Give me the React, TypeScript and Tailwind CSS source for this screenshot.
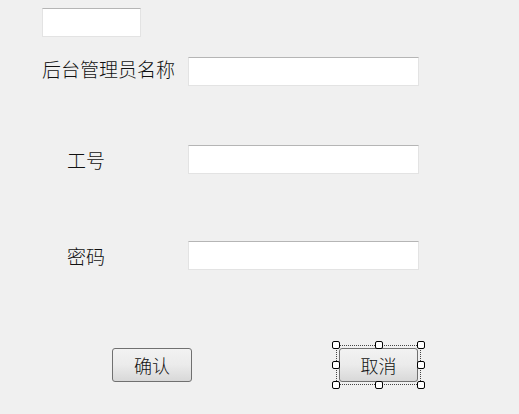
const font = { fontFamily: '"Noto Sans CJK SC", "Noto Sans", sans-serif' };

const Field = ({ className = "" }: { className?: string }) => (
  <div
    className={`h-[29px] bg-white border border-[#e3e3e3] border-t-[#b5b5b5] ${className}`}
  />
);

const Handle = ({ className }: { className: string }) => (
  <span
    className={`absolute w-[8px] h-[8px] bg-white border border-black rounded-[2px] ${className}`}
  />
);

const btn =
  "h-[34px] rounded-[3px] border border-[#707070] bg-gradient-to-b from-[#f2f2f2] via-[#ebebeb] to-[#d8d8d8] text-[18px] leading-none font-light";

const App = () => {
  return (
    <div
      className="w-[519px] h-[414px] bg-[#f0f0f0] pt-[8px] text-[#111] overflow-hidden font-light"
      style={font}
    >
      <Field className="ml-[42px] w-[99px]" />

      <div className="mt-[20px] flex items-center">
        <div className="w-[188px] pl-[42px] text-[19px] leading-none -mt-[6px]">后台管理员名称</div>
        <Field className="w-[231px]" />
      </div>

      <div className="mt-[59px] flex items-center">
        <div className="w-[188px] pl-[67px] text-[19px] leading-none">工号</div>
        <Field className="w-[231px]" />
      </div>

      <div className="mt-[67px] flex items-center">
        <div className="w-[188px] pl-[67px] text-[19px] leading-none">密码</div>
        <Field className="w-[231px]" />
      </div>

      <div className="mt-[78px] flex">
        <button className={`ml-[112px] w-[80px] ${btn}`}>确认</button>
        <div className="relative ml-[147px]">
          <button className={`w-[79px] ${btn}`}>取消</button>
          <div className="absolute -left-[3px] -top-[3px] -right-[3px] -bottom-[3px] border border-dotted border-[#444]" />
          <Handle className="-left-[7px] -top-[7px]" />
          <Handle className="left-[36px] -top-[7px]" />
          <Handle className="-right-[7px] -top-[7px]" />
          <Handle className="-left-[7px] top-[13px]" />
          <Handle className="-right-[7px] top-[13px]" />
          <Handle className="-left-[7px] -bottom-[7px]" />
          <Handle className="left-[36px] -bottom-[7px]" />
          <Handle className="-right-[7px] -bottom-[7px]" />
        </div>
      </div>
    </div>
  );
};

export default App;
